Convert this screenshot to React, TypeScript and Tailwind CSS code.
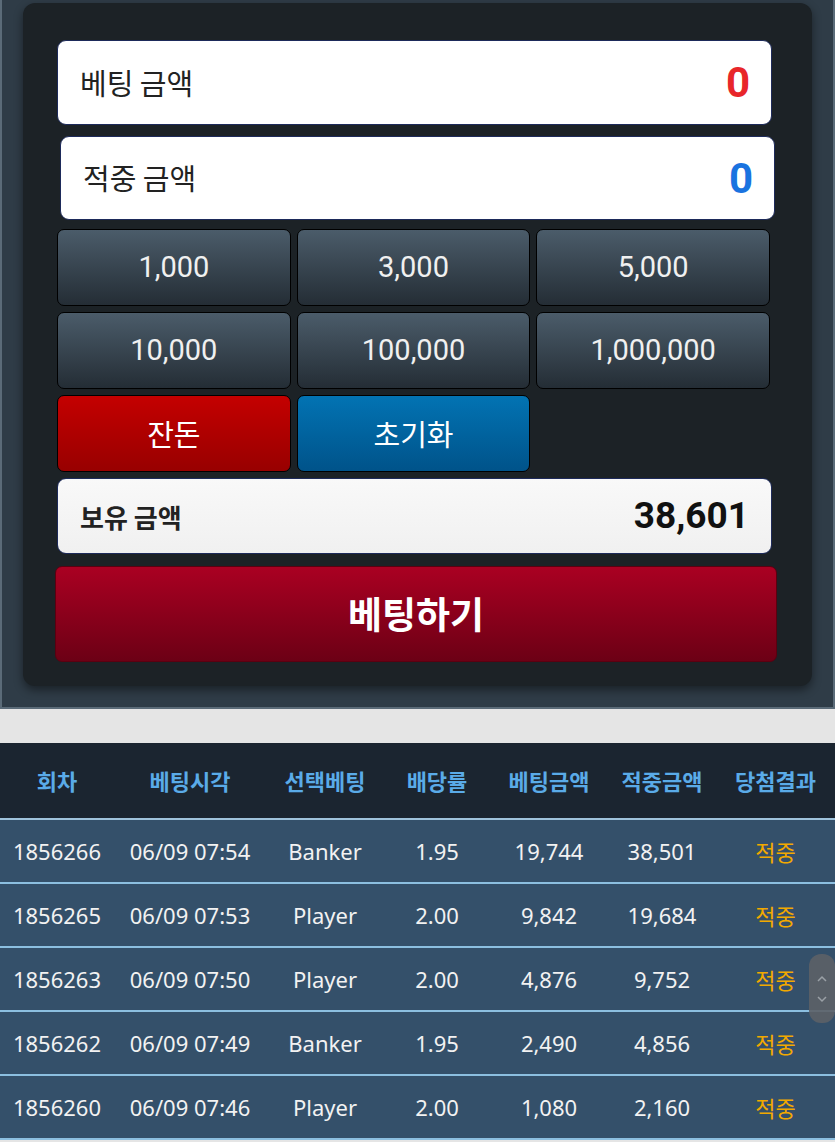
import React from "react";

const kr = { fontFamily: '"Noto Sans CJK KR", "Noto Sans", sans-serif' };
const rb = { fontFamily: 'Roboto, "Noto Sans CJK KR", sans-serif' };
const ns = { fontFamily: '"Noto Sans", "Noto Sans CJK KR", sans-serif' };

const rows = [
  ["1856266", "06/09 07:54", "Banker", "1.95", "19,744", "38,501"],
  ["1856265", "06/09 07:53", "Player", "2.00", "9,842", "19,684"],
  ["1856263", "06/09 07:50", "Player", "2.00", "4,876", "9,752"],
  ["1856262", "06/09 07:49", "Banker", "1.95", "2,490", "4,856"],
  ["1856260", "06/09 07:46", "Player", "2.00", "1,080", "2,160"],
];

const headers = ["회차", "베팅시각", "선택베팅", "배당률", "베팅금액", "적중금액", "당첨결과"];

function ChipButton({ label }: { label: string }) {
  return (
    <div
      className="h-[77px] rounded-[7px] border border-black bg-[linear-gradient(to_bottom,#4b5c6a,#242d35)] flex items-center justify-center text-[29px] text-[#f0f0f0]"
      style={rb}
    >
      {label}
    </div>
  );
}

export default function App() {
  return (
    <div className="w-[835px] h-[1142px] overflow-hidden relative bg-[#e5e5e5]" style={kr}>
      {/* top section */}
      <div className="bg-[#2f3c47] border-l-2 border-r-2 border-b-2 border-[#5b6b78] pt-[3px] pb-[21px] pl-[21px] pr-[21px]">
        <div className="rounded-[12px] bg-[#1c2226] shadow-[0_4px_10px_rgba(0,0,0,0.45)] pt-[37px] pb-[24px] pl-[34px] pr-[40px]">
          <div className="h-[85px] rounded-[9px] bg-white border border-[#1d2a5a] flex items-center justify-between pl-[22px] pr-[21px]">
            <span className="text-[29px] text-[#222]">베팅 금액</span>
            <span className="text-[42px] font-bold text-[#e8262a]" style={rb}>0</span>
          </div>
          <div className="mt-[11px] ml-[3px] -mr-[3px] h-[84px] rounded-[9px] bg-white border border-[#1d2a5a] flex items-center justify-between pl-[22px] pr-[21px]">
            <span className="text-[29px] text-[#222]">적중 금액</span>
            <span className="text-[42px] font-bold text-[#1a73e0]" style={rb}>0</span>
          </div>
          <div className="mt-[9px] mr-[2px] grid grid-cols-3 gap-x-[6px] gap-y-[6px]">
            <ChipButton label="1,000" />
            <ChipButton label="3,000" />
            <ChipButton label="5,000" />
            <ChipButton label="10,000" />
            <ChipButton label="100,000" />
            <ChipButton label="1,000,000" />
            <div className="h-[77px] rounded-[7px] border border-black bg-[linear-gradient(to_bottom,#c40000,#980000)] flex items-center justify-center text-[29px] text-white">
              잔돈
            </div>
            <div className="h-[77px] rounded-[7px] border border-black bg-[linear-gradient(to_bottom,#0273b3,#00538a)] flex items-center justify-center text-[29px] text-white">
              초기화
            </div>
            <div />
          </div>
          <div className="mt-[6px] h-[76px] rounded-[9px] bg-[linear-gradient(to_bottom,#f9f9f9,#f0f0f0)] border border-[#1d2a5a] flex items-center justify-between pl-[22px] pr-[22px]">
            <span className="text-[26px] font-bold text-[#222]">보유 금액</span>
            <span className="text-[37px] font-bold text-[#111]" style={rb}>38,601</span>
          </div>
          <div className="mt-[12px] -ml-[2px] -mr-[5px] h-[96px] rounded-[7px] border border-[#5a0010] bg-[linear-gradient(to_bottom,#aa0022,#6c0015)] flex items-center justify-center text-[37px] font-bold text-white">
            베팅하기
          </div>
        </div>
      </div>

      {/* gray band */}
      <div className="h-[34px] bg-[#e5e5e5]" />

      {/* table */}
      <div className="bg-[#34506a]">
        <div className="grid grid-cols-[114px_152px_118px_106px_118px_108px_119px] h-[77px] bg-[#1b2530] border-b-2 border-[#9fc3dc]">
          {headers.map((h) => (
            <div key={h} className="flex items-center justify-center text-[22px] font-bold text-[#5aabe8]">
              {h}
            </div>
          ))}
        </div>
        {rows.map((r) => (
          <div
            key={r[0]}
            className="grid grid-cols-[114px_152px_118px_106px_118px_108px_119px] h-[64px] border-b-2 border-[#8cbfe0] text-[22px] text-[#f2f2f2]"
            style={ns}
          >
            {r.map((c, i) => (
              <div key={i} className="flex items-center justify-center">
                {c}
              </div>
            ))}
            <div className="flex items-center justify-center text-[#f2a900]" style={kr}>적중</div>
          </div>
        ))}
      </div>

      {/* overlay scroll thumb */}
      <div className="absolute left-[809px] top-[954px] w-[26px] h-[69px] rounded-[12px] bg-[#5c6167]/90 flex flex-col items-center justify-center gap-[12px]">
        <svg width="12" height="8" viewBox="0 0 12 8" fill="none" stroke="#9aa0a6" strokeWidth="1.5">
          <path d="M2 6 L6 2 L10 6" />
        </svg>
        <svg width="12" height="8" viewBox="0 0 12 8" fill="none" stroke="#9aa0a6" strokeWidth="1.5">
          <path d="M2 2 L6 6 L10 2" />
        </svg>
      </div>
    </div>
  );
}
